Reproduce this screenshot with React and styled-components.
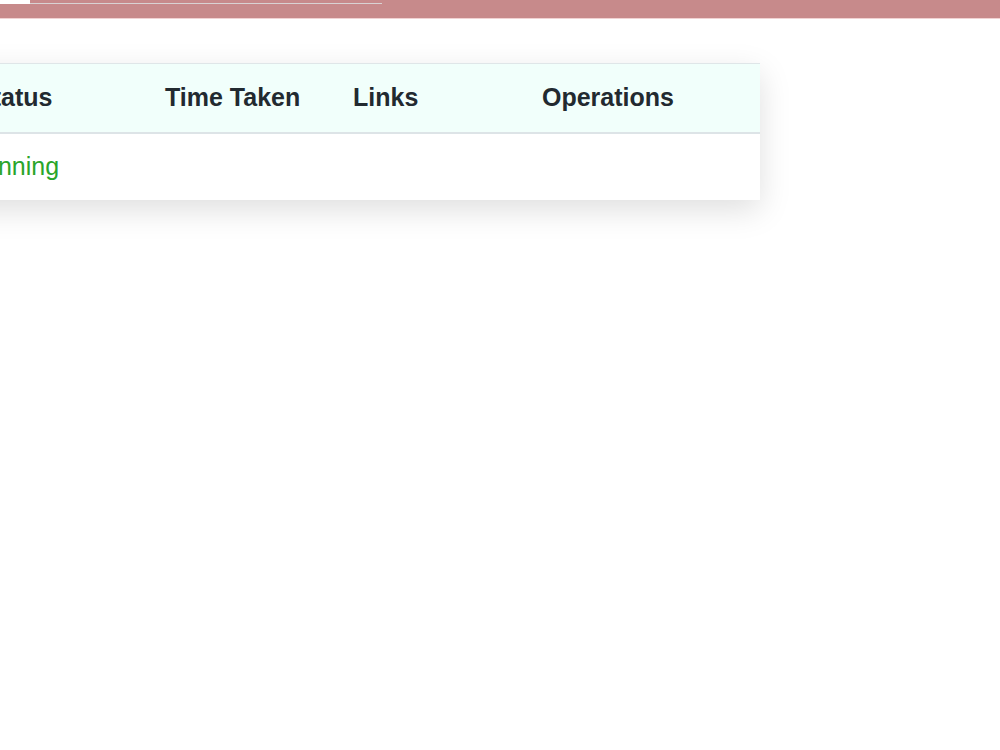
import React from 'react';
import styled, { createGlobalStyle } from 'styled-components';

const GlobalStyle = createGlobalStyle`
  html, body {
    margin: 0;
    padding: 0;
    background: #ffffff;
    font-family: "Liberation Sans", Arial, sans-serif;
    overflow: hidden;
  }
  *, *::before, *::after {
    box-sizing: border-box;
  }
`;

const Page = styled.div`
  width: 1000px;
  height: 750px;
  overflow: hidden;
  background: #ffffff;
`;

const TopBar = styled.header`
  height: 19px;
  background: #c78a8b;
  border-bottom: 1px solid #f1d3d3;
  display: flex;
  align-items: flex-start;
`;

const TopTab = styled.div`
  width: 30px;
  height: 4px;
  background: #ffffff;
`;

const TopLine = styled.div`
  width: 352px;
  height: 1px;
  margin-top: 3px;
  background: #d9d3d3;
`;

const TableWrap = styled.div`
  margin: 44px 0 0 -40px;
  width: 800px;
  box-shadow: 0 10px 30px rgba(0, 0, 0, 0.13);
`;

const Table = styled.table`
  width: 800px;
  border-collapse: collapse;
  table-layout: fixed;
  border-top: 1px solid #dfe6e8;
`;

const HeadRow = styled.tr`
  background: #f1fffb;
  border-bottom: 2px solid #dde4e7;
`;

const Th = styled.th`
  width: ${(p) => p.w}px;
  height: 69px;
  padding: 0 16px;
  text-align: left;
  font-size: 25px;
  font-weight: bold;
  color: #222a30;
`;

const Td = styled.td`
  height: 67px;
  padding: 0 16px 0 6px;
  font-size: 25px;
  color: ${(p) => p.color || '#222a30'};
`;

const columns = [
  { label: 'Status', w: 189 },
  { label: 'Time Taken', w: 188 },
  { label: 'Links', w: 189 },
  { label: 'Operations', w: 234 },
];

const App = () => (
  <Page>
    <GlobalStyle />
    <TopBar>
      <TopTab />
      <TopLine />
    </TopBar>
    <TableWrap>
      <Table>
        <thead>
          <HeadRow>
            {columns.map((c) => (
              <Th key={c.label} w={c.w}>{c.label}</Th>
            ))}
          </HeadRow>
        </thead>
        <tbody>
          <tr>
            <Td color="#2aa52a">Running</Td>
            <Td />
            <Td />
            <Td />
          </tr>
        </tbody>
      </Table>
    </TableWrap>
  </Page>
);

export default App;
